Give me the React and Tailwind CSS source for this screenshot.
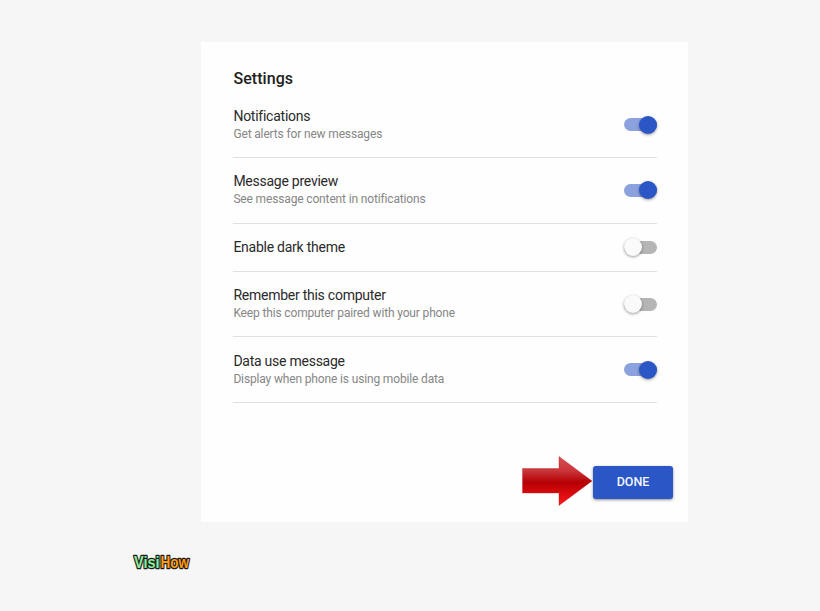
const settings = [
  { title: 'Notifications', detail: 'Get alerts for new messages', on: true, size: 'h-[66px]' },
  { title: 'Message preview', detail: 'See message content in notifications', on: true, size: 'h-[66px] pb-px' },
  { title: 'Enable dark theme', on: false, size: 'h-12 pb-px' },
  { title: 'Remember this computer', detail: 'Keep this computer paired with your phone', on: false, size: 'h-[65px]' },
  { title: 'Data use message', detail: 'Display when phone is using mobile data', on: true, size: 'h-[66px]' },
];

function Toggle({ on }) {
  return (
    <div
      className={`flex h-[13px] w-[33px] items-center rounded-full ${
        on ? 'justify-end bg-[#8ca2df]' : 'justify-start bg-[#b5b5b5]'
      }`}
    >
      <div
        className={`size-[18px] shrink-0 rounded-full shadow-[0_1px_3px_rgba(0,0,0,0.4)] ${
          on ? 'bg-[#2a56c6]' : 'bg-[#fafafa]'
        }`}
      />
    </div>
  );
}

function SettingRow({ title, detail, on, size }) {
  return (
    <div className={`flex items-center justify-between border-b border-[#e0e0e0] ${size}`}>
      <div>
        <div className="text-[14px] leading-[18px] tracking-[-0.25px] text-[#2a2a2a]">{title}</div>
        {detail && (
          <div className="text-[12px] leading-[18px] tracking-[-0.15px] text-[#868686]">{detail}</div>
        )}
      </div>
      <Toggle on={on} />
    </div>
  );
}

function Arrow() {
  return (
    <svg className="h-[50px] w-[71px]" viewBox="0 0 71 50">
      <defs>
        <linearGradient id="arrowFill" x1="0" y1="0" x2="0" y2="1">
          <stop offset="0" stopColor="#d95050" />
          <stop offset="0.3" stopColor="#c93438" />
          <stop offset="0.53" stopColor="#b50004" />
          <stop offset="0.75" stopColor="#d90a0e" />
          <stop offset="1" stopColor="#ff1a1e" />
        </linearGradient>
      </defs>
      <path d="M0.5 12.5H37V0.5L70 25L37 49.5V37H0.5Z" fill="url(#arrowFill)" stroke="#b5161b" strokeOpacity="0.5" strokeWidth="0.7" />
    </svg>
  );
}

function Logo() {
  return (
    <svg className="h-6 w-[64px] font-['Liberation_Sans',sans-serif] text-[16px] font-bold" viewBox="0 0 64 24">
      <g strokeLinejoin="round" paintOrder="stroke" stroke="#1a1a1a" strokeWidth="2.6">
        <text x="3" y="16.5" textLength="25.5" lengthAdjust="spacingAndGlyphs" fill="#8df09c">Visi</text>
        <text x="29.5" y="16.5" textLength="28.5" lengthAdjust="spacingAndGlyphs" fill="#ff9d12">How</text>
      </g>
    </svg>
  );
}

export default function App() {
  return (
    <div className="h-[611px] w-[820px] overflow-hidden bg-[#f6f6f6] pt-[42px] font-[Roboto,sans-serif]">
      <main className="ml-[201px] flex h-[479.5px] w-[487px] flex-col bg-[#fefefe] pt-[26px]">
        <h1 className="ml-[32.5px] pt-px text-[16px] leading-5 font-medium tracking-[0.05px] text-[#212121]">Settings</h1>
        <section className="mt-[3px] mr-[31px] ml-[32.4px]">
          {settings.map((setting) => (
            <SettingRow key={setting.title} {...setting} />
          ))}
        </section>
        <div className="mt-[53px] mr-[15px] flex items-center justify-end">
          <Arrow />
          <button className="mt-[2px] h-[33px] w-[80px] rounded-[3px] bg-[#2a56c6] text-[12.5px] font-medium text-[#f4f7ff] shadow-[0_1px_3px_rgba(0,0,0,0.45)]">
            DONE
          </button>
        </div>
      </main>
      <div className="mt-[29.5px] ml-[131px]">
        <Logo />
      </div>
    </div>
  );
}
